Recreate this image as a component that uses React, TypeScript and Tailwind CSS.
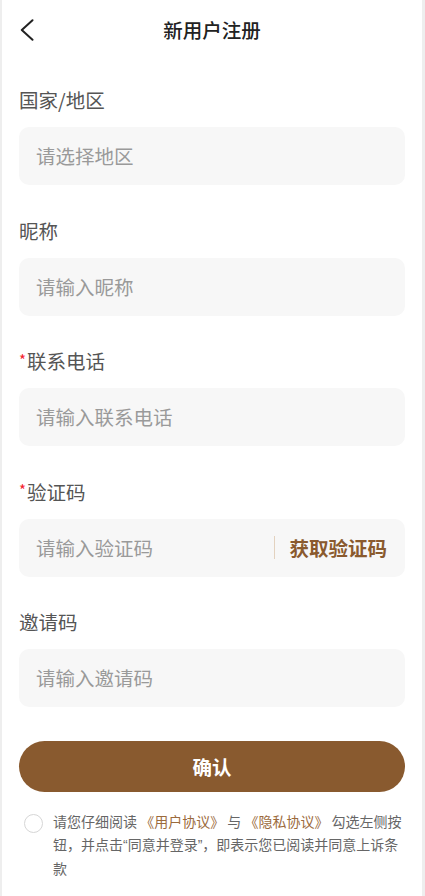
import React, { useState } from 'react';

const font = { fontFamily: '"Noto Sans CJK SC", "Noto Sans", sans-serif' };
const quoteFont = { fontFamily: '"Liberation Sans", Arial, sans-serif' };

interface FieldProps {
    label: string;
    placeholder: string;
    required?: boolean;
    suffix?: React.ReactNode;
}

const Field: React.FC<FieldProps> = ({ label, placeholder, required = false, suffix }) => (
    <div className="flex flex-col">
        <div className="flex items-center h-[26px] mb-[14px] text-[19.5px] leading-[26px] text-[#555555]">
            {required && <span className="text-[#f5222d] text-[15px] mr-[1px] -mt-[3px]">*</span>}
            <span>{label}</span>
        </div>
        <div className="flex items-center h-[58px] rounded-[10px] bg-[#f7f7f7] pl-[17px] pr-[18px]">
            <input
                placeholder={placeholder}
                className="flex-1 min-w-0 bg-transparent outline-none text-[19.5px] text-[#333] placeholder:text-[#9a9a9a]"
                style={font}
            />
            {suffix}
        </div>
    </div>
);

export default function App() {
    const [agreed, setAgreed] = useState(false);

    return (
        <div className="min-h-[896px] bg-white border-l-[2px] border-r-[3px] border-[#eeeeee]" style={font}>
            <header className="relative flex items-center justify-center h-[60px]">
                <button className="absolute left-[18px] top-[19px] w-[14px] h-[22px]">
                    <svg width="14" height="22" viewBox="0 0 14 22" fill="none">
                        <path d="M12.5 1.2 L1.8 11 L12.5 20.8" stroke="#222" strokeWidth="2" strokeLinecap="round" strokeLinejoin="round" />
                    </svg>
                </button>
                <h1 className="text-[19.5px] font-medium text-[#222] -mt-[1px]">新用户注册</h1>
            </header>

            <main className="px-[17px]">
                <div className="flex flex-col gap-[32.5px] pt-[27px]">
                    <Field label="国家/地区" placeholder="请选择地区" />
                    <Field label="昵称" placeholder="请输入昵称" />
                    <Field label="联系电话" placeholder="请输入联系电话" required />
                    <Field
                        label="验证码"
                        placeholder="请输入验证码"
                        required
                        suffix={
                            <div className="flex items-center">
                                <span className="w-[1px] h-[23px] bg-[#e3d2bf] mr-[14px]" />
                                <button className="text-[19.5px] font-bold text-[#8a5a2e]">获取验证码</button>
                            </div>
                        }
                    />
                    <Field label="邀请码" placeholder="请输入邀请码" />
                </div>

                <button className="mt-[34px] w-full h-[51px] rounded-full bg-[#895a2f] text-white text-[19.5px] font-bold">
                    确认
                </button>

                <div className="flex mt-[18px] pl-[5px]">
                    <button
                        onClick={() => setAgreed(!agreed)}
                        className={`shrink-0 mt-[4px] w-[19px] h-[19px] rounded-full border ${agreed ? 'border-[#895a2f] bg-[#895a2f]' : 'border-[#d6d6d6] bg-white'}`}
                    />
                    <p className="ml-[10px] text-[14px] leading-[23px] text-[#666666]">
                        请您仔细阅读 <span className="text-[#9b6a3c]">《用户协议》</span> 与 <span className="text-[#9b6a3c]">《隐私协议》</span> 勾选左侧按钮，并点击<span style={quoteFont}>“</span>同意并登录<span style={quoteFont}>”</span>，即表示您已阅读并同意上诉条款
                    </p>
                </div>
            </main>
        </div>
    );
}
